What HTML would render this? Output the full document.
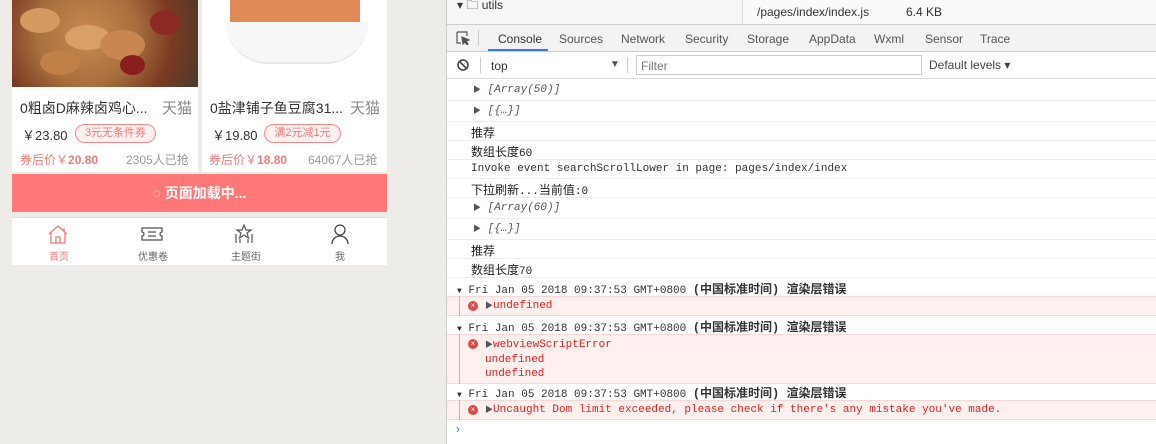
<!DOCTYPE html>
<html><head><meta charset="utf-8"><style>
*{margin:0;padding:0;box-sizing:border-box}
body{width:1156px;height:444px;overflow:hidden;background:#eeece9;position:relative;font-family:"Liberation Sans","Noto Sans CJK SC",sans-serif;}
.a{position:absolute;white-space:nowrap}
.m{font-family:"Liberation Mono","Noto Sans CJK SC",monospace;font-size:11px}
.row{position:absolute;left:447px;width:709px;border-bottom:1px solid #eeeeee;background:#fff}
</style></head><body>
<!-- phone -->
<div class="a" style="left:12px;top:0;width:186px;height:172px;background:#fff"></div>
<div class="a" style="left:202px;top:0;width:185px;height:172px;background:#fff"></div>
<div class="a" style="left:12px;top:0;width:186px;height:87px;background:radial-gradient(circle at 40% 40%,#c98a4f,#a8703e 40%,#7a3a22 70%,#4a3a2a);"></div>
<div class="a" style="left:20px;top:8px;width:40px;height:25px;border-radius:50%;background:#d49a60"></div>
<div class="a" style="left:65px;top:25px;width:45px;height:25px;border-radius:50%;background:#d8a066"></div>
<div class="a" style="left:100px;top:30px;width:45px;height:30px;border-radius:50%;background:#c98650"></div>
<div class="a" style="left:120px;top:55px;width:25px;height:20px;border-radius:50%;background:#8a1e1e"></div>
<div class="a" style="left:150px;top:10px;width:30px;height:25px;border-radius:50%;background:#8a2a22"></div>
<div class="a" style="left:40px;top:50px;width:40px;height:25px;border-radius:50%;background:#c08048"></div>
<div class="a" style="left:230px;top:0;width:130px;height:42px;background:#e08a55;border-radius:0 0 10px 10px"></div>
<div class="a" style="left:226px;top:22px;width:142px;height:42px;border-radius:0 0 70px 70px;background:#f7f7f7;border-bottom:2px solid #e8e8e8"></div>
<div class="a" style="left:20px;top:98px;font-size:14px;color:#333">0粗卤D麻辣卤鸡心...</div>
<div class="a" style="left:162px;top:97px;font-size:15px;color:#888">天猫</div>
<div class="a" style="left:210px;top:98px;font-size:14px;color:#333">0盐津铺子鱼豆腐31...</div>
<div class="a" style="left:350px;top:97px;font-size:15px;color:#888">天猫</div>
<div class="a" style="left:22px;top:125px;font-size:13px;color:#333">￥23.80</div>
<div class="a" style="left:75px;top:124px;width:81px;height:19px;border:1px solid #f08a8a;border-radius:10px;background:#fff0f0;color:#f07a7a;font-size:11px;text-align:center;line-height:17px">3元无条件券</div>
<div class="a" style="left:212px;top:125px;font-size:13px;color:#333">￥19.80</div>
<div class="a" style="left:264px;top:124px;width:77px;height:19px;border:1px solid #f08a8a;border-radius:10px;background:#fff0f0;color:#f07a7a;font-size:11px;text-align:center;line-height:17px">满2元减1元</div>
<div class="a" style="left:20px;top:151px;font-size:12px;color:#f07a7a">券后价￥<b>20.80</b></div>
<div class="a" style="left:126px;top:151px;font-size:12px;color:#999">2305人已抢</div>
<div class="a" style="left:209px;top:151px;font-size:12px;color:#f07a7a">券后价￥<b>18.80</b></div>
<div class="a" style="left:308px;top:151px;font-size:12px;color:#999">64067人已抢</div>
<div class="a" style="left:12px;top:174px;width:375px;height:38px;background:#ff7877;color:#fff;font-size:14px;font-weight:bold;text-align:center;line-height:38px">◌ 页面加载中...</div>
<div class="a" style="left:12px;top:217px;width:375px;height:48px;background:#fff;border-top:1px solid #ddd"></div>
<svg class="a" style="left:47px;top:224px" width="22" height="20" viewBox="0 0 22 20" fill="none" stroke="#f07a7a" stroke-width="1.3"><path d="M2 10L11 2l9 8M4 8v11h14V8M9 19v-6h4v6M17 4v3"/></svg>
<svg class="a" style="left:140px;top:227px" width="24" height="14" viewBox="0 0 24 14" fill="none" stroke="#555" stroke-width="1.3"><path d="M2 1h20v4a2 2 0 000 4v4H2V9a2 2 0 000-4z M8 5h8M8 9h8"/></svg>
<svg class="a" style="left:234px;top:224px" width="20" height="20" viewBox="0 0 20 20" fill="none" stroke="#555" stroke-width="1.2"><path d="M10 1l2 5h5l-4 3 1.5 5L10 11l-4.5 3L7 9 3 6h5z M2 10v9M18 10v9M6 15v4M14 15v4"/></svg>
<svg class="a" style="left:331px;top:224px" width="18" height="20" viewBox="0 0 18 20" fill="none" stroke="#444" stroke-width="1.3"><circle cx="9" cy="6" r="5"/><path d="M1 20c0-5 4-8 8-8s8 3 8 8"/></svg>
<div class="a" style="left:49px;top:248px;font-size:10px;color:#f07a7a">首页</div>
<div class="a" style="left:138px;top:248px;font-size:10px;color:#666">优惠卷</div>
<div class="a" style="left:231px;top:248px;font-size:10px;color:#666">主题街</div>
<div class="a" style="left:335px;top:248px;font-size:10px;color:#666">我</div>
<!-- devtools -->
<div class="a" style="left:446px;top:0;width:710px;height:444px;background:#fff;border-left:1px solid #ccc"></div>
<div class="a" style="left:447px;top:0;width:709px;height:27px;background:#fafafa"></div>
<div class="a" style="left:447px;top:0;width:296px;height:27px;background:#f6f6f6;border-right:1px solid #ddd"></div>
<div class="a" style="left:457px;top:-4px;font-size:12px;color:#333">▾ 🗀 utils</div>
<div class="a" style="left:757px;top:5px;font-size:12px;color:#333">/pages/index/index.js</div>
<div class="a" style="left:906px;top:5px;font-size:12px;color:#333">6.4 KB</div>
<div class="a" style="left:447px;top:24px;width:709px;height:28px;background:#f3f3f3;border-top:1px solid #ccc;border-bottom:1px solid #ccc"></div>
<svg class="a" style="left:456px;top:31px" width="14" height="14" viewBox="0 0 14 14" fill="none" stroke="#555" stroke-width="1.2"><path d="M1 1h10v4M1 1v11h4"/><path d="M6 6l7 3-3 1 2 3-1 1-2-3-2 2z" fill="#555"/></svg>
<div class="a" style="left:478px;top:30px;width:1px;height:16px;background:#ccc"></div>
<div class="a" style="left:488px;top:27px;width:60px;height:24px;border-bottom:2px solid #3879d9"></div>
<div class="a" style="left:498px;top:32px;font-size:12px;color:#333">Console</div>
<div class="a" style="left:559px;top:32px;font-size:12px;color:#555">Sources</div>
<div class="a" style="left:621px;top:32px;font-size:12px;color:#555">Network</div>
<div class="a" style="left:685px;top:32px;font-size:12px;color:#555">Security</div>
<div class="a" style="left:747px;top:32px;font-size:12px;color:#555">Storage</div>
<div class="a" style="left:809px;top:32px;font-size:12px;color:#555">AppData</div>
<div class="a" style="left:874px;top:32px;font-size:12px;color:#555">Wxml</div>
<div class="a" style="left:925px;top:32px;font-size:12px;color:#555">Sensor</div>
<div class="a" style="left:980px;top:32px;font-size:12px;color:#555">Trace</div>
<div class="a" style="left:447px;top:78px;width:709px;height:1px;background:#ddd"></div>
<svg class="a" style="left:457px;top:59px" width="12" height="12" viewBox="0 0 12 12" fill="none" stroke="#444" stroke-width="1.6"><circle cx="6" cy="6" r="5"/><path d="M2.5 2.5l7 7"/></svg>
<div class="a" style="left:480px;top:57px;width:1px;height:16px;background:#ccc"></div>
<div class="a" style="left:491px;top:59px;font-size:12px;color:#333">top</div>
<div class="a" style="left:610px;top:59px;font-size:10px;color:#555">▼</div>
<div class="a" style="left:627px;top:57px;width:1px;height:16px;background:#ccc"></div>
<div class="a" style="left:636px;top:55px;width:286px;height:20px;border:1px solid #ccc"></div>
<div class="a" style="left:641px;top:59px;font-size:12px;color:#777">Filter</div>
<div class="a" style="left:929px;top:58px;font-size:12px;color:#444">Default levels ▾</div>
<!-- rows -->
<div class="row" style="top:80px;height:21px"></div>
<div class="a m" style="left:473px;top:84px;color:#555;font-style:italic"><span style="font-size:8px;font-style:normal">▶</span> [Array(50)]</div>
<div class="row" style="top:101px;height:21px"></div>
<div class="a m" style="left:473px;top:105px;color:#555;font-style:italic"><span style="font-size:8px;font-style:normal">▶</span> [{…}]</div>
<div class="row" style="top:122px;height:19px"></div>
<div class="a" style="left:471px;top:124px;font-size:12px;color:#222">推荐</div>
<div class="row" style="top:141px;height:19px"></div>
<div class="a m" style="left:471px;top:143px;font-size:12px;color:#222">数组长度<span style="font-size:11px">60</span></div>
<div class="row" style="top:160px;height:19px"></div>
<div class="a m" style="left:471px;top:163px;color:#333">Invoke event searchScrollLower in page: pages/index/index</div>
<div class="row" style="top:179px;height:19px"></div>
<div class="a m" style="left:471px;top:181px;font-size:12px;color:#222">下拉刷新<span style="font-size:11px">...</span>当前值<span style="font-size:11px">:0</span></div>
<div class="row" style="top:198px;height:21px"></div>
<div class="a m" style="left:473px;top:202px;color:#555;font-style:italic"><span style="font-size:8px;font-style:normal">▶</span> [Array(60)]</div>
<div class="row" style="top:219px;height:21px"></div>
<div class="a m" style="left:473px;top:223px;color:#555;font-style:italic"><span style="font-size:8px;font-style:normal">▶</span> [{…}]</div>
<div class="row" style="top:240px;height:19px"></div>
<div class="a" style="left:471px;top:242px;font-size:12px;color:#222">推荐</div>
<div class="row" style="top:259px;height:19px"></div>
<div class="a m" style="left:471px;top:261px;font-size:12px;color:#222">数组长度<span style="font-size:11px">70</span></div>
<!-- errors -->
<div class="a m" style="left:457px;top:280px;color:#333"><span style="font-size:8px">▼</span> Fri Jan 05 2018 09:37:53 GMT+0800 <b style="font-size:12px">(中国标准时间) 渲染层错误</b></div>
<div class="a" style="left:447px;top:296px;width:709px;height:20px;background:#fff0f0;border-top:1px solid #fbd6d6;border-bottom:1px solid #fbd6d6"></div>
<div class="a" style="left:459px;top:296px;width:1px;height:20px;background:#bbb"></div>
<div class="a" style="left:468px;top:301px;width:10px;height:10px;border-radius:50%;background:#e04848;color:#fff;font-size:8px;line-height:10px;text-align:center">×</div>
<div class="a m" style="left:485px;top:300px;color:#e02020"><span style="font-size:8px;color:#555">▶</span>undefined</div>
<div class="a m" style="left:457px;top:318px;color:#333"><span style="font-size:8px">▼</span> Fri Jan 05 2018 09:37:53 GMT+0800 <b style="font-size:12px">(中国标准时间) 渲染层错误</b></div>
<div class="a" style="left:447px;top:334px;width:709px;height:50px;background:#fff0f0;border-top:1px solid #fbd6d6;border-bottom:1px solid #fbd6d6"></div>
<div class="a" style="left:459px;top:334px;width:1px;height:50px;background:#bbb"></div>
<div class="a" style="left:468px;top:339px;width:10px;height:10px;border-radius:50%;background:#e04848;color:#fff;font-size:8px;line-height:10px;text-align:center">×</div>
<div class="a m" style="left:485px;top:338px;color:#e02020;line-height:14px"><span style="font-size:8px;color:#555">▶</span>webviewScriptError<br>undefined<br>undefined</div>
<div class="a m" style="left:457px;top:384px;color:#333"><span style="font-size:8px">▼</span> Fri Jan 05 2018 09:37:53 GMT+0800 <b style="font-size:12px">(中国标准时间) 渲染层错误</b></div>
<div class="a" style="left:447px;top:400px;width:709px;height:20px;background:#fff0f0;border-top:1px solid #fbd6d6;border-bottom:1px solid #fbd6d6"></div>
<div class="a" style="left:459px;top:400px;width:1px;height:20px;background:#bbb"></div>
<div class="a" style="left:468px;top:405px;width:10px;height:10px;border-radius:50%;background:#e04848;color:#fff;font-size:8px;line-height:10px;text-align:center">×</div>
<div class="a m" style="left:485px;top:404px;color:#e02020"><span style="font-size:8px;color:#555">▶</span>Uncaught Dom limit exceeded, please check if there's any mistake you've made.</div>
<div class="a" style="left:456px;top:422px;font-size:12px;color:#3879d9">›</div>
</body></html>
